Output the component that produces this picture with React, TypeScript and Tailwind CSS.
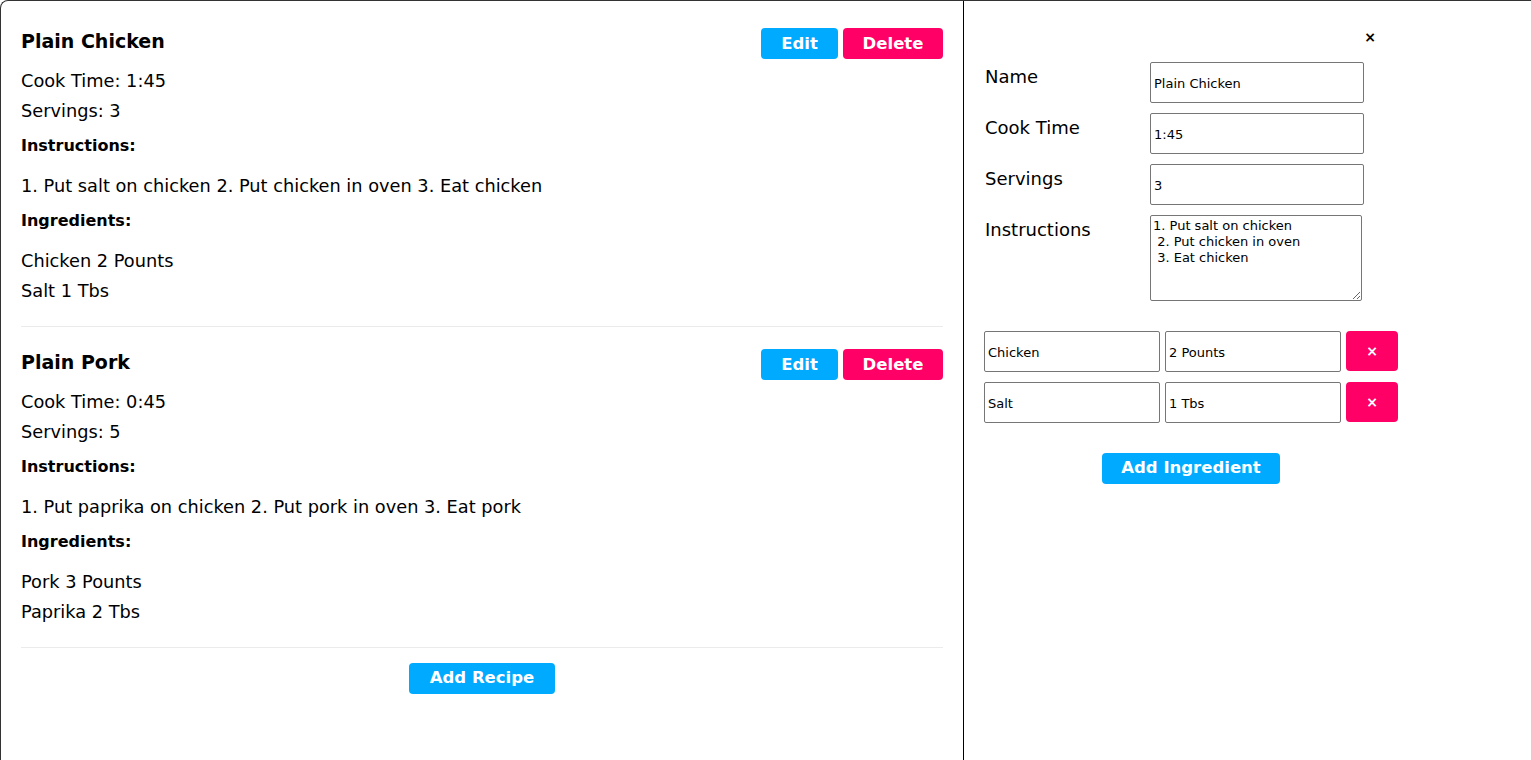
import { useState } from "react";

interface IIngredient {
  name: string;
  amount: string;
}

interface IRecipe {
  id: number;
  name: string;
  cookTime: string;
  servings: number;
  instructions: string;
  ingredients: IIngredient[];
}

const recipes: IRecipe[] = [
  {
    id: 1,
    name: "Plain Chicken",
    cookTime: "1:45",
    servings: 3,
    instructions: "1. Put salt on chicken\n 2. Put chicken in oven\n 3. Eat chicken",
    ingredients: [
      { name: "Chicken", amount: "2 Pounts" },
      { name: "Salt", amount: "1 Tbs" },
    ],
  },
  {
    id: 2,
    name: "Plain Pork",
    cookTime: "0:45",
    servings: 5,
    instructions: "1. Put paprika on chicken\n 2. Put pork in oven\n 3. Eat pork",
    ingredients: [
      { name: "Pork", amount: "3 Pounts" },
      { name: "Paprika", amount: "2 Tbs" },
    ],
  },
];

const font = { fontFamily: '"DejaVu Sans", "Noto Sans", sans-serif' };

function RecipeItem({ recipe }: { recipe: IRecipe }) {
  return (
    <div className="pt-[22px] pb-[20px] border-b border-[#ebebeb] text-[17.75px] leading-[30px] text-black">
      <div className="flex items-center justify-between h-[31px]">
        <h3 className="text-[19px] font-bold -mt-[5px]">{recipe.name}</h3>
        <div className="flex gap-[5px]">
          <button className="w-[77px] h-[31px] rounded-[4px] bg-[#00aaff] text-white text-[16.5px] font-bold">
            Edit
          </button>
          <button className="w-[100px] h-[31px] rounded-[4px] bg-[#ff0066] text-white text-[16.5px] font-bold">
            Delete
          </button>
        </div>
      </div>
      <div className="mt-[7px]">Cook Time: {recipe.cookTime}</div>
      <div>Servings: {recipe.servings}</div>
      <h4 className="mt-[5px] text-[16px] font-bold">Instructions:</h4>
      <div className="mt-[10px]">{recipe.instructions.replace(/\n/g, "")}</div>
      <h4 className="mt-[5px] text-[16px] font-bold">Ingredients:</h4>
      <div className="mt-[10px]">
        {recipe.ingredients.map((ing) => (
          <div key={ing.name}>
            {ing.name} {ing.amount}
          </div>
        ))}
      </div>
    </div>
  );
}

function RecipeEdit({ recipe }: { recipe: IRecipe }) {
  const [ingredients, setIngredients] = useState(recipe.ingredients);
  const inputCls =
    "h-[41px] border border-[#767676] rounded-[2px] px-[3px] pt-[2px] text-[13px] text-black bg-white outline-none";

  return (
    <div className="w-fit pl-[20px] text-[18px] text-black">
      <div className="flex justify-end pr-[22px] pt-[20px] h-[52px]">
        <button className="text-[14px] font-bold leading-[20px]">&times;</button>
      </div>
      <div className="flex flex-col gap-[10px] mt-[9px]">
        <div className="flex">
          <label className="w-[166px] leading-[30px] pl-[1px]">Name</label>
          <input className={`${inputCls} w-[214px]`} defaultValue={recipe.name} />
        </div>
        <div className="flex">
          <label className="w-[166px] leading-[30px] pl-[1px]">Cook Time</label>
          <input className={`${inputCls} w-[214px]`} defaultValue={recipe.cookTime} />
        </div>
        <div className="flex">
          <label className="w-[166px] leading-[30px] pl-[1px]">Servings</label>
          <input className={`${inputCls} w-[214px]`} defaultValue={recipe.servings} />
        </div>
        <div className="flex">
          <label className="w-[166px] leading-[30px] pl-[1px]">Instructions</label>
          <textarea
            className="w-[212px] h-[86px] border border-[#767676] rounded-[2px] px-[2px] py-[2px] text-[13px] leading-[16px] bg-white outline-none resize"
            defaultValue={recipe.instructions}
          />
        </div>
      </div>
      <div className="flex flex-col gap-[10px] mt-[30px]">
        {ingredients.map((ing, i) => (
          <div key={i} className="flex gap-[5px]">
            <input className={`${inputCls} w-[176px]`} defaultValue={ing.name} />
            <input className={`${inputCls} w-[176px]`} defaultValue={ing.amount} />
            <button
              className="w-[52px] h-[40px] rounded-[4px] bg-[#ff0066] text-white text-[14px] font-bold"
              onClick={() => setIngredients(ingredients.filter((_, j) => j !== i))}
            >
              &times;
            </button>
          </div>
        ))}
      </div>
      <div className="flex justify-center mt-[30px]">
        <button className="w-[178px] h-[31px] rounded-[4px] bg-[#00aaff] text-white text-[16.5px] font-bold">
          Add Ingredient
        </button>
      </div>
    </div>
  );
}

export default function App() {
  return (
    <div
      className="flex h-[760px] bg-white border-t border-l border-[#333] rounded-tl-[8px] overflow-hidden"
      style={font}
    >
      <div className="w-[963px] shrink-0 border-r border-black px-[20px] pt-[5px]">
        {recipes.map((r) => (
          <RecipeItem key={r.id} recipe={r} />
        ))}
        <div className="flex justify-center mt-[15px]">
          <button className="w-[146px] h-[31px] rounded-[4px] bg-[#00aaff] text-white text-[16.5px] font-bold">
            Add Recipe
          </button>
        </div>
      </div>
      <div className="flex-1">
        <RecipeEdit recipe={recipes[0]} />
      </div>
    </div>
  );
}
